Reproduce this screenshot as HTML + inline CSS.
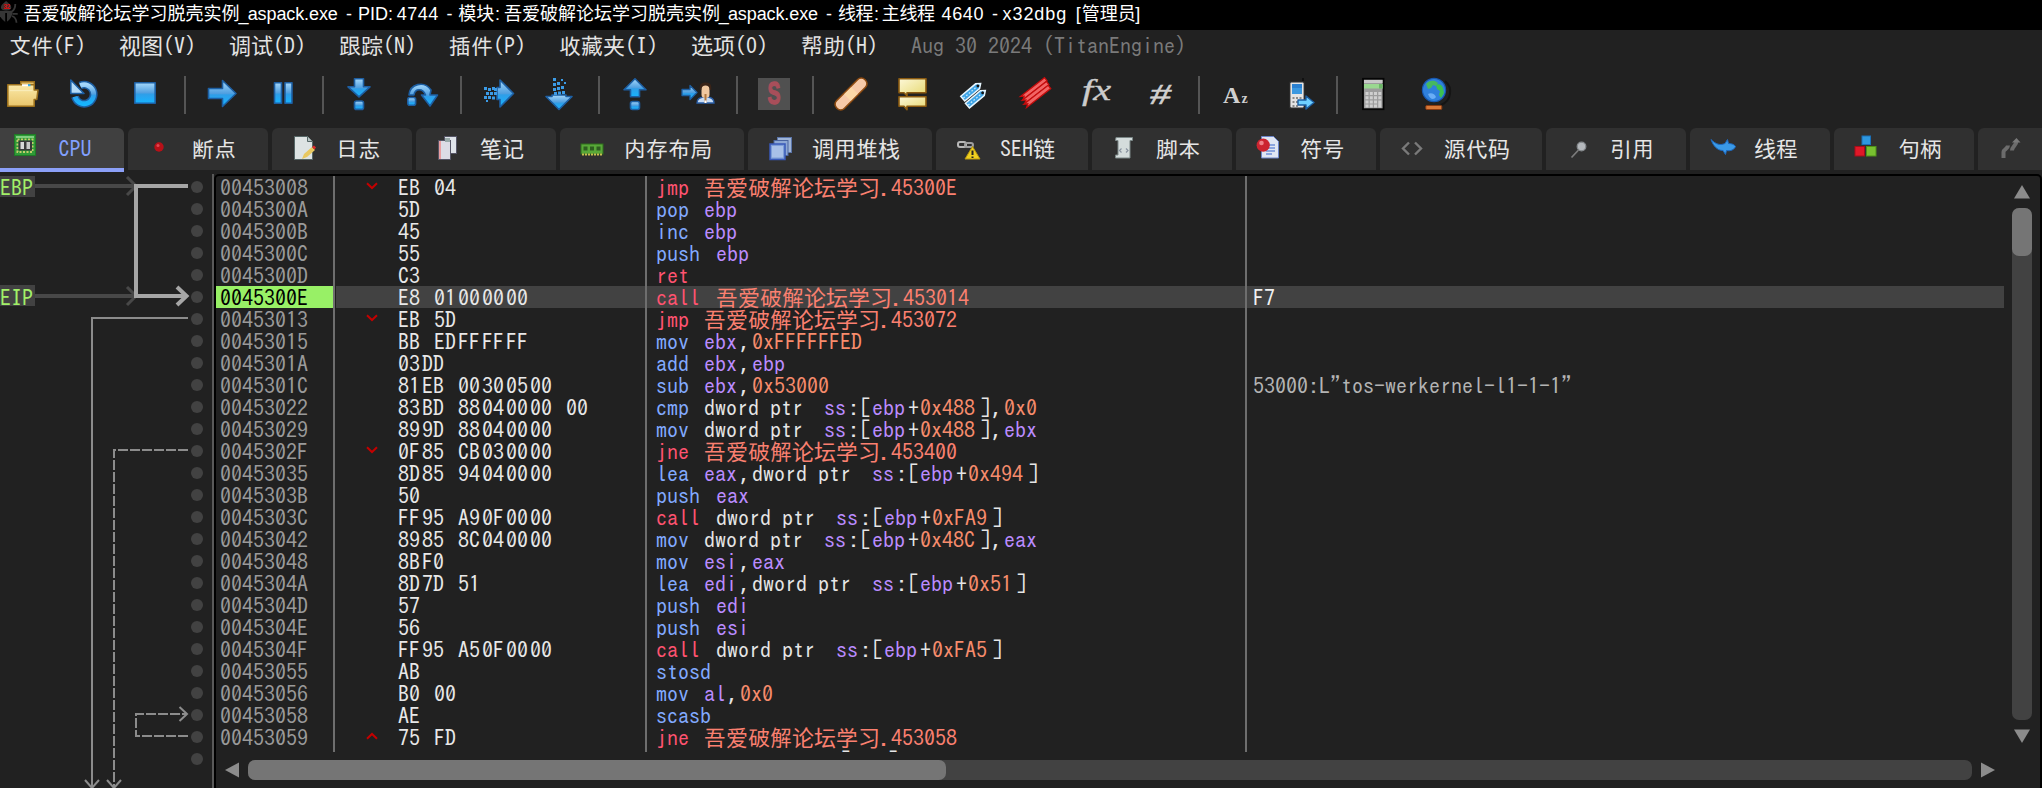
<!DOCTYPE html>
<html lang="zh-CN"><head><meta charset="utf-8"><title>x32dbg</title>
<style>
*{margin:0;padding:0;box-sizing:border-box}
html,body{width:2042px;height:788px;overflow:hidden;background:#212121}
body{position:relative;font-family:"IPAGothic","Noto Sans CJK SC",monospace;font-size:22px;line-height:22px;color:#e0e0e0;font-feature-settings:"hwid"}
.a{position:absolute;white-space:pre}
#title{left:0;top:0;width:2042px;height:30px;background:#000}
#tt{position:absolute;left:23.4px;top:0;height:30px;white-space:nowrap;font-size:0}
#title span{display:inline-block;height:30px;line-height:29px;font-family:"Liberation Sans","Noto Sans CJK SC",sans-serif;font-size:18px;color:#fff;white-space:pre;font-feature-settings:normal}
.m{position:absolute;top:35px;height:22px;white-space:pre;color:#e4e4e4}
.sep{position:absolute;top:76px;width:2px;height:38px;background:#555}
.ic{position:absolute;top:78px;width:32px;height:32px;overflow:visible}
.tab{position:absolute;top:128px;height:42px;background:#303030;border-radius:6px 6px 0 0}
.tab.on{background:#404040;height:44px;border-bottom:4px solid #8ca0f8;border-radius:0 6px 0 0}
.tab svg{position:absolute;left:21px;top:8px;width:22px;height:24px;overflow:visible}
.tab b{position:absolute;left:64px;top:10px;font-weight:normal;white-space:pre;color:#e6e6e6}
.r{position:absolute;left:220px;height:22px;white-space:pre}
.ad{display:inline-block;width:178px;color:#9a9a9a}
.by{display:inline-block;width:258px;color:#e8e8e8}
.ds{display:inline-block;width:597px}
.cm{display:inline-block;color:#b4b4b4}
.k{color:#82aaff}.j{color:#ff5370}.g{color:#bb8cff}.v{color:#f78c6c}.w{color:#e6e6e6}.c{color:#fb8070}
i{display:inline-block;font-style:normal;white-space:pre}
.w1{width:12px}.w2{width:24px}.w3{width:36px}.w4{width:48px}.w5{width:60px}.w7{width:84px}.w9{width:108px}.w10{width:120px}
.dot{position:absolute;left:191px;width:12px;height:12px;border-radius:6px;background:#424242}
.lab{position:absolute;left:0;width:35px;height:21px;background:#424242;color:#a2f068}
</style></head><body>
<svg width="0" height="0" style="position:absolute"><defs><linearGradient id="gb" x1="0" y1="0" x2="0" y2="1"><stop offset="0" stop-color="#a5d8fb"/><stop offset=".5" stop-color="#4f9fe0"/><stop offset=".55" stop-color="#2f9ee8"/><stop offset="1" stop-color="#16b4ff"/></linearGradient><linearGradient id="gy" x1="0" y1="0" x2="0" y2="1"><stop offset="0" stop-color="#fbe9a8"/><stop offset="1" stop-color="#e9c66c"/></linearGradient><linearGradient id="gc" x1="0" y1="0" x2="1" y2="1"><stop offset="0" stop-color="#fdf8d8"/><stop offset="1" stop-color="#e6d870"/></linearGradient></defs></svg>
<div id="title" class="a"><svg class="a" style="left:0;top:0" width="20" height="24" viewBox="0 0 20 24"><path d="M6.100 1C9 3.500 11.300 5 11.300 7.500c0 2-2.300 3-5.200 3s-5.200-1-5.200-3C.9 5 3.200 3.500 6.100 1z" fill="#363636"/><path d="M-1 10.800h13.600C12.600 16 10 20 6.100 22.300 3 20.500 0 17-1 14z" fill="#363636"/><path d="M6.100 13v9.300" stroke="#000" stroke-width="1.800"/><path d="M12 11.500c2-1.500 3.300-4 3.300-7.500M12.500 13.800h5.200M12 16c3 1 4.300 3.500 4.500 6.800" fill="none" stroke="#363636" stroke-width="1.800"/><text x="3.200" y="9.200" font-family="'Liberation Sans',sans-serif" font-weight="bold" font-size="6.500" fill="#e00808" letter-spacing="-.3">32</text></svg>
<div id="tt">
<span style="width:215.1px">吾爱破解论坛学习脱壳实例</span>
<span style="width:9.2px">_</span>
<span style="width:98.3px;letter-spacing:-0.1px">aspack.exe </span>
<span style="width:12.0px">- </span>
<span style="width:38.7px">PID: </span>
<span style="width:49.8px;letter-spacing:0.5px">4744 </span>
<span style="width:11.9px">- </span>
<span style="width:36.6px">模块</span>
<span style="width:9.0px">: </span>
<span style="width:214.8px">吾爱破解论坛学习脱壳实例</span>
<span style="width:9.2px">_</span>
<span style="width:98.0px;letter-spacing:-0.1px">aspack.exe </span>
<span style="width:12.1px">- </span>
<span style="width:35.9px;letter-spacing:-0.5px">线程</span>
<span style="width:7.9px">: </span>
<span style="width:59.8px;letter-spacing:-0.4px">主线程 </span>
<span style="width:50.3px;letter-spacing:0.6px">4640 </span>
<span style="width:10.6px">- </span>
<span style="width:73.2px;letter-spacing:0.95px">x32dbg </span>
<span style="width:6.1px">[</span>
<span style="width:53.6px">管理员</span>
<span style="width:20.0px">]</span>
</div>
</div>
<div class="m" style="left:9px">文件(F)</div>
<div class="m" style="left:119px">视图(V)</div>
<div class="m" style="left:229px">调试(D)</div>
<div class="m" style="left:339px">跟踪(N)</div>
<div class="m" style="left:449px">插件(P)</div>
<div class="m" style="left:559px">收藏夹(I)</div>
<div class="m" style="left:691px">选项(O)</div>
<div class="m" style="left:801px">帮助(H)</div>
<div class="m" style="left:911px;color:#7a7a7a">Aug 30 2024 (TitanEngine)</div>
<svg class="ic" style="left:7px" viewBox="0 0 32 32"><path d="M13.700 3.700h13.600v4h-13.600z" fill="#e3bf68" stroke="#9a6f1c" stroke-width="1.400"/><path d="M.800 6.800h26.400v5.200h3.800l-1.200 9.500h-2.600v6.700h-26.400z" fill="url(#gy)" stroke="#9a6f1c" stroke-width="1.600" stroke-linejoin="round"/><path d="M15 7.200h6" stroke="#fff" stroke-width="2"/><path d="M21 7.200h2.500" stroke="#38b0f0" stroke-width="2"/><path d="M3 12.500h22.500" stroke="#f9ecb8" stroke-width="1.300"/></svg>
<svg class="ic" style="left:69px" viewBox="0 0 32 32"><path d="M11.200 7.600A9.500 9.500 0 1 1 6 18.700" fill="none" stroke="#1d5fa3" stroke-width="7.800"/><path d="M11.200 7.600A9.500 9.500 0 1 1 6 18.700" fill="none" stroke="url(#gb)" stroke-width="4.800"/><path d="M1.800 2v13.500h13.200z" fill="#b4dbf8" stroke="#1d5fa3" stroke-width="1.600" stroke-linejoin="round"/></svg>
<svg class="ic" style="left:131px" viewBox="0 0 32 32"><rect x="3.8" y="4.8" width="20.4" height="20.4" fill="url(#gb)" stroke="#1d5fa3" stroke-width="1.6" stroke-linejoin="round"/></svg>
<div class="sep" style="left:184px"></div>
<svg class="ic" style="left:207px" viewBox="0 0 32 32"><path d="M1.5 10.5h14v-8l13.5 13-13.5 13v-8h-14z" fill="url(#gb)" stroke="#1d5fa3" stroke-width="1.6" stroke-linejoin="round"/></svg>
<svg class="ic" style="left:269px" viewBox="0 0 32 32"><rect x="5.5" y="4.8" width="7" height="20.4" fill="url(#gb)" stroke="#1d5fa3" stroke-width="1.6" stroke-linejoin="round"/><rect x="16" y="4.8" width="7" height="20.4" fill="url(#gb)" stroke="#1d5fa3" stroke-width="1.6" stroke-linejoin="round"/></svg>
<div class="sep" style="left:322px"></div>
<svg class="ic" style="left:345px" viewBox="0 0 32 32"><path d="M9.5 .8h9v8h6.5l-11 10-11-10h6.500z" fill="url(#gb)" stroke="#1d5fa3" stroke-width="1.6" stroke-linejoin="round"/><rect x="9.500" y="23" width="9" height="8.4" rx="2" fill="url(#gb)" stroke="#1d5fa3" stroke-width="1.6" stroke-linejoin="round"/></svg>
<svg class="ic" style="left:407px" viewBox="0 0 32 32"><path d="M2 17C3 6 17 2 24 12l-1 5h7.500l-7.500 11-8.500-11h4C16 10 8 10 7 17z" fill="url(#gb)" stroke="#1d5fa3" stroke-width="1.6" stroke-linejoin="round"/><rect x=".8" y="19.500" width="7.800" height="7.800" rx="2" fill="url(#gb)" stroke="#1d5fa3" stroke-width="1.6" stroke-linejoin="round"/></svg>
<div class="sep" style="left:460px"></div>
<svg class="ic" style="left:483px" viewBox="0 0 32 32"><path d="M14 9.500h3v-7.500l13.500 13.500-13.500 13.500v-7.500h-3z" fill="url(#gb)" stroke="#1d5fa3" stroke-width="1.6" stroke-linejoin="round"/><path d="M1 9h3v3h-3zM5 10h3v3h-3zM9 9h3v3h-3zM3 14h3v3h-3zM7 14h3v3h-3zM11 14h3v3h-3zM1 18h3v3h-3zM5 18h3v3h-3zM9 18.500h3v3h-3zM11 10h3v3h-3zM3 22h2v2h-2z" fill="#3b9be6"/></svg>
<svg class="ic" style="left:545px" viewBox="0 0 32 32"><path d="M7 17v1.500h-6l13 13 13-13h-6v-1.500z" fill="url(#gb)" stroke="#1d5fa3" stroke-width="1.6" stroke-linejoin="round"/><path d="M8 0h3v3h-3zM12 4h3v3h-3zM16 1h2v2h-2zM8 5h3v3h-3zM12 9h3v3h-3zM16 8h3v3h-3zM8 10h3v3h-3zM9 14h3v3h-3zM13 13.500h3v3h-3zM17 13h3v3h-3zM19 4h2v2h-2z" fill="#3b9be6"/></svg>
<div class="sep" style="left:598px"></div>
<svg class="ic" style="left:621px" viewBox="0 0 32 32"><path d="M14 .8l11 11h-6.500v7h-9v-7h-6.500z" fill="url(#gb)" stroke="#1d5fa3" stroke-width="1.6" stroke-linejoin="round"/><rect x="9.500" y="23.500" width="9" height="8" rx="2" fill="url(#gb)" stroke="#1d5fa3" stroke-width="1.6" stroke-linejoin="round"/></svg>
<svg class="ic" style="left:683px" viewBox="0 0 32 32"><path d="M-1 11.500h8v-4l7 7-7 7v-4h-8z" fill="url(#gb)" stroke="#1d5fa3" stroke-width="1.300" stroke-linejoin="round"/><path d="M14 25c0-5 4-6 8.500-6s8.500 1 8.500 6z" fill="#c8dcf4" stroke="#2a5fa8" stroke-width="1.300"/><rect x="18.500" y="7" width="8" height="13" rx="3.500" fill="#f0c8a0"/><path d="M17.500 12c0-7 10-7 10 0v-3c0-5-10-5-10 0z" fill="#3a2418" stroke="#3a2418" stroke-width="1.500"/><path d="M22.500 16v9" stroke="#b07840" stroke-width="2"/><rect x="21.500" y="22.500" width="2" height="2.500" fill="#fff"/></svg>
<div class="sep" style="left:736px"></div>
<svg class="ic" style="left:759px" viewBox="0 0 32 32"><rect x="-1" width="32" height="32" fill="#505050"/><text transform="translate(15 26.300) scale(.72 1.16)" text-anchor="middle" font-family="'Liberation Sans',sans-serif" font-weight="bold" font-size="27" fill="#a84e5a" stroke="#a84e5a" stroke-width="1.200">S</text></svg>
<div class="sep" style="left:812px"></div>
<svg class="ic" style="left:835px" viewBox="0 0 32 32"><g transform="rotate(-45 16 16)"><rect x="-4" y="10.500" width="40" height="11" rx="5" fill="#f6c9a8" stroke="#8c4a10" stroke-width="1.600"/><rect x="11" y="11.300" width="10" height="9.400" fill="#fbd8a8"/></g></svg>
<svg class="ic" style="left:897px" viewBox="0 0 32 32"><path d="M2 .8h27v14h-19l0 3-3-3h-5z" fill="url(#gc)" stroke="#8a5a10" stroke-width="1.600" stroke-linejoin="round"/><path d="M2 18.800h27v9.400h-19l0 3.500-3-3.500h-5z" fill="url(#gc)" stroke="#8a5a10" stroke-width="1.600" stroke-linejoin="round"/></svg>
<svg class="ic" style="left:959px" viewBox="0 0 32 32"><g transform="translate(3.500 -1.500) rotate(-40 16 16) scale(.88)"><path d="M0 8.500h22l4.500 3.500-4.500 3.500h-22z" fill="#3fa4e6" stroke="#e8f6ff" stroke-width="1.700"/><path d="M-1 18h22l4.500 3.500-4.500 3.500h-22z" fill="#3fa4e6" stroke="#e8f6ff" stroke-width="1.700"/><circle cx="22.500" cy="12" r="1.600" fill="#111"/><circle cx="21.500" cy="21.500" r="1.600" fill="#111"/><path d="M1 12h18M0 21.500h18" stroke="#bfe4fa" stroke-width="1.500" stroke-dasharray="2 2"/></g></svg>
<svg class="ic" style="left:1021px" viewBox="0 0 32 32"><g transform="translate(4 -3) rotate(-38 16 16) scale(.9)"><path d="M-4 8.500h34v4.600h-34l3.500-2.300z" fill="#f26464" stroke="#c40c0c" stroke-width="1.400"/><path d="M-5 13.100h34v4.600h-34l3.500-2.300z" fill="#f26464" stroke="#c40c0c" stroke-width="1.400"/><path d="M-6 17.700h34v4.600h-34l3.500-2.300z" fill="#f26464" stroke="#c40c0c" stroke-width="1.400"/></g></svg>
<svg class="ic" style="left:1083px" viewBox="0 0 32 32"><text x="-1" y="22" textLength="29" lengthAdjust="spacingAndGlyphs" font-family="'Liberation Serif',serif" font-style="italic" font-size="30" fill="#cccccc" stroke="#cccccc" stroke-width=".35">fx</text></svg>
<svg class="ic" style="left:1145px" viewBox="0 0 32 32"><text x="5" y="26" textLength="21" lengthAdjust="spacingAndGlyphs" font-family="'Liberation Serif',serif" font-style="italic" font-size="29" fill="#d0d0d0" stroke="#d0d0d0" stroke-width=".5">#</text></svg>
<div class="sep" style="left:1198px"></div>
<svg class="ic" style="left:1221px" viewBox="0 0 32 32"><text x="2" y="24.500" font-family="'Liberation Serif',serif" font-weight="bold" font-size="24" fill="#d0d0d0">A</text><text x="20.500" y="24.500" font-family="'Liberation Serif',serif" font-weight="bold" font-size="14" fill="#d0d0d0">z</text></svg>
<svg class="ic" style="left:1283px" viewBox="0 0 32 32"><rect x="19" y="0" width="2" height="5" fill="#111"/><rect x="6.700" y="3.700" width="14.600" height="26.600" rx="1.500" fill="#e4e4e4" stroke="#2a2a2a" stroke-width="1.400"/><rect x="9" y="6" width="10" height="10" fill="#3a98e0"/><rect x="9" y="6" width="10" height="4" fill="#2a80d0"/><path d="M9.500 19h2v2h-2zM13 19h2v2h-2zM16.500 19h2v2h-2zM9.500 23h2v2h-2zM13 23h2v2h-2zM9.500 27h2v2h-2zM13 27h2v2h-2z" fill="#8a8a8a"/><path d="M15 22h8v-4l8 6.500-8 6.500v-4h-8z" fill="#6fd0ff" stroke="#1d5fa3" stroke-width="1.400" stroke-linejoin="round"/></svg>
<div class="sep" style="left:1336px"></div>
<svg class="ic" style="left:1359px" viewBox="0 0 32 32"><rect x="4" y=".8" width="20.500" height="30.400" fill="#9c9c9c" stroke="#050505" stroke-width="1.800"/><rect x="5" y="2" width="18.500" height="3" fill="#c8c8c8"/><rect x="5" y="6" width="18.500" height="4.500" fill="#9ad890"/><rect x="20" y="6" width="3.500" height="4.500" fill="#6cb868"/><path d="M6.500 14h3v3h-3zM10.800 14h3v3h-3zM15 14h3v3h-3zM19.300 14h3v3h-3zM6.500 18.200h3v3h-3zM10.800 18.200h3v3h-3zM15 18.200h3v3h-3zM19.300 18.200h3v3h-3zM6.500 22.400h3v3h-3zM10.800 22.400h3v3h-3zM15 22.400h3v3h-3zM6.500 26.600h3v3h-3zM10.800 26.600h3v3h-3zM15 26.600h3v3h-3zM19.300 22.400h3v7.200h-3z" fill="#cfcfcf"/></svg>
<svg class="ic" style="left:1421px" viewBox="0 0 32 32"><path d="M24 3a14 14 0 0 1-4 24" fill="none" stroke="#151515" stroke-width="2"/><circle cx="13" cy="12" r="11.600" fill="#2f80dc" stroke="#1858b0" stroke-width="1.200"/><path d="M5 6c2-3 6-4 9-3l3 2-2 3-3-1-2 3-3 1z" fill="#46b860"/><path d="M15 7c3-2 6 0 7 3l1 5-3 5-2-3 1-4-3-2z" fill="#3cc050"/><path d="M7 16c3-2 7 0 8 3-2 3-6 3-8-3z" fill="#6aaef6"/><rect x="4.800" y="27.500" width="16" height="4" rx="1" fill="#d87838" stroke="#8a3a10" stroke-width="1"/></svg>
<div class="tab on" style="left:-8px;width:132px"><svg viewBox="0 0 22 24"><g transform="translate(1 -2)"><rect x=".500" y=".500" width="21" height="21" fill="#2f9a38" stroke="#1f7a26"/><rect x="2" y="2" width="18" height="2" fill="#7fcf80"/><rect x="3.500" y="5.500" width="15" height="12.500" fill="none" stroke="#c4cc6c" stroke-width="2" stroke-dasharray="2 1.500"/><rect x="4.500" y="6.500" width="13.500" height="10" fill="#3a3a3a"/><rect x="6.500" y="8" width="3.500" height="7" fill="#d8d8d8"/><rect x="12.500" y="8" width="3.500" height="7" fill="#c8c8c8"/></g></svg><b style="color:#82a0ff;left:66.5px">CPU</b></div>
<div class="tab" style="left:128px;width:140px"><svg viewBox="0 0 22 24"><circle cx="10" cy="11" r="4.700" fill="#b81018"/><circle cx="9" cy="9.500" r="1.500" fill="#e04850"/></svg><b>断点</b></div>
<div class="tab" style="left:272px;width:140px"><svg viewBox="0 0 22 24"><path d="M1.500 .500h13l5 5v18h-18z" fill="#dde3e3" stroke="#566"/><path d="M14.500 .500v5h5" fill="#b8c4c4" stroke="#566"/><path d="M9 23l2-5 8-7 3 3-8 7z" fill="#e8c860"/><path d="M19 11l2-1.500 2 2-1.500 2z" fill="#e02828"/></svg><b>日志</b></div>
<div class="tab" style="left:416px;width:140px"><svg viewBox="0 0 22 24"><rect x="7.500" y=".500" width="12" height="17" fill="#dfe4ea" stroke="#556"/><rect x="1.500" y="4.500" width="12" height="19" fill="#dcdce6" stroke="#556"/><path d="M3 5v18" stroke="#e88" stroke-width="1.500"/><rect x="8" y="2" width="5" height="4" fill="#9aa"/></svg><b>笔记</b></div>
<div class="tab" style="left:560px;width:184px"><svg viewBox="0 0 22 24"><rect x="0" y="8" width="22" height="10" fill="#58a838" stroke="#2e6e1c"/><path d="M2.500 10.500h4v4h-4zM9 10.500h4v4h-4zM15.500 10.500h4v4h-4z" fill="#2e5e20"/><path d="M1 18.500h20" stroke="#c8c050" stroke-width="2" stroke-dasharray="2 1"/></svg><b>内存布局</b></div>
<div class="tab" style="left:748px;width:184px"><svg viewBox="0 0 22 24"><rect x="8.500" y="1.500" width="14" height="15" fill="#9eb4d8" stroke="#5a74a8"/><rect x="5" y="4.500" width="14" height="15" fill="#8ea8d4" stroke="#4a64a0"/><rect x="1" y="8" width="15" height="15.500" fill="#7e9ed8" stroke="#3858b8" stroke-width="1.500"/><rect x="3" y="10" width="11" height="11.500" fill="#a8c0e8"/></svg><b>调用堆栈</b></div>
<div class="tab" style="left:936px;width:152px"><svg viewBox="0 0 22 24"><rect x="1" y="6" width="8" height="5" rx="2" fill="none" stroke="#b8b8b8" stroke-width="2"/><rect x="8" y="7" width="8" height="4" rx="2" fill="none" stroke="#a0a0a0" stroke-width="2"/><path d="M15.500 10.500l7.500 12.500h-15z" fill="#f0d020" stroke="#b89810"/><path d="M15.500 14.500v4.500M15.500 20.500v1.500" stroke="#222" stroke-width="2"/></svg><b>SEH链</b></div>
<div class="tab" style="left:1092px;width:140px"><svg viewBox="0 0 22 24"><path d="M3 1.500h16.500v3h-2.500v17.500h-14.500v-3h2.500v-14.500h-2.500z" fill="#d4dcdc" stroke="#7a8686"/><path d="M8.500 12.500l-2 2 2 2M13 12.500l2 2-2 2" fill="none" stroke="#8a94a0" stroke-width="1.200"/></svg><b>脚本</b></div>
<div class="tab" style="left:1236px;width:140px"><svg viewBox="0 0 22 24"><path d="M4.500 .500h12l5 5v16.500h-17z" fill="#dfe6f4" stroke="#6a84c8"/><path d="M9 9h9M9 12h9M9 15h9M9 18h6" stroke="#7090d8" stroke-width="1.400"/><circle cx="6.200" cy="9.200" r="6.600" fill="#cc2430"/><circle cx="4.500" cy="7" r="2.300" fill="#ee8088"/></svg><b>符号</b></div>
<div class="tab" style="left:1380px;width:162px"><svg viewBox="0 0 22 24"><path d="M8 6.500l-6 6 6 6M14 6.500l6 6-6 6" fill="none" stroke="#7a7a7a" stroke-width="2.400"/></svg><b>源代码</b></div>
<div class="tab" style="left:1546px;width:140px"><svg viewBox="0 0 22 24"><circle cx="14.500" cy="10.500" r="4.300" fill="#b4b8bc" stroke="#85898d" stroke-width="1.300"/><path d="M11.500 14l-7 7.500" stroke="#7c7c7c" stroke-width="1.700"/></svg><b>引用</b></div>
<div class="tab" style="left:1690px;width:140px"><svg viewBox="0 0 22 24"><path d="M0 3.500c5 5 9 6 14 4l2.500-4 1 4c3 0 6 1 7 3-1 3-5 5-9 4l-1 4-2.500-4c-6 0-10-5-12-11z" fill="#3a9ae8" stroke="#1c68c0"/></svg><b>线程</b></div>
<div class="tab" style="left:1834px;width:140px"><svg viewBox="0 0 22 24"><g transform="translate(-1 -1.500)"><rect x="8" y="1.500" width="8.500" height="8.500" fill="#2e98e0" stroke="#1a70b8"/><rect x="1" y="12" width="9.500" height="9.500" fill="#e01828" stroke="#a80c18"/><rect x="12.500" y="12" width="9.500" height="9.500" fill="#78c030" stroke="#4e9018"/></g></svg><b>句柄</b></div>
<div class="tab" style="left:1978px;width:100px"><svg viewBox="0 0 22 24"><path d="M4.500 22v-6c0-3 4.500-3 4.500-6.500M13 14.500c0-4 4.500-5 4.500-9.500" fill="none" stroke="#6c6c6c" stroke-width="4"/><path d="M13 6.500l4.500-4.500 4 4.500z" fill="#7a7a7a"/></svg><b></b></div>
<div class="a" style="left:212px;top:174px;width:2px;height:614px;background:#5a5a5a"></div>
<div class="a" style="left:214px;top:174px;width:1828px;height:618px;border:2px solid #000;border-radius:5px"></div>
<div class="a" style="left:336px;top:286px;width:1668px;height:22px;background:#424242"></div>
<div class="a" style="left:216px;top:286px;width:118px;height:22px;background:#98f066"></div>
<div class="a" style="left:333px;top:176px;width:2px;height:576px;background:#6e6e6e"></div>
<div class="a" style="left:645px;top:176px;width:2px;height:576px;background:#6e6e6e"></div>
<div class="a" style="left:1245px;top:176px;width:2px;height:576px;background:#6e6e6e"></div>
<div class="a" style="left:0;top:0;width:2004px;height:752px;overflow:hidden">
<div class="dot" style="top:181px"></div>
<div class="r" style="top:177px"><span class="ad">00453008 </span><span class="by"><i class="w2">EB</i><i class="w1"> </i><i class="w2">04</i> </span><span class="ds"><i class="j w3">jmp</i><i class="w w1"> </i><i class="c">吾爱破解论坛学习.45300E</i> </span></div>
<svg class="a" style="left:366px;top:182px" width="12" height="8" viewBox="0 0 12 8"><path d="M1 1.2L6 6L11 1.2" fill="none" stroke="#c40000" stroke-width="2"/></svg>
<div class="dot" style="top:203px"></div>
<div class="r" style="top:199px"><span class="ad">0045300A </span><span class="by"><i class="w2">5D</i> </span><span class="ds"><i class="k w3">pop</i><i class="w w1"> </i><i class="g w3">ebp</i> </span></div>
<div class="dot" style="top:225px"></div>
<div class="r" style="top:221px"><span class="ad">0045300B </span><span class="by"><i class="w2">45</i> </span><span class="ds"><i class="k w3">inc</i><i class="w w1"> </i><i class="g w3">ebp</i> </span></div>
<div class="dot" style="top:247px"></div>
<div class="r" style="top:243px"><span class="ad">0045300C </span><span class="by"><i class="w2">55</i> </span><span class="ds"><i class="k w4">push</i><i class="w w1"> </i><i class="g w3">ebp</i> </span></div>
<div class="dot" style="top:269px"></div>
<div class="r" style="top:265px"><span class="ad">0045300D </span><span class="by"><i class="w2">C3</i> </span><span class="ds"><i class="j w3">ret</i> </span></div>
<div class="dot" style="top:291px"></div>
<div class="r" style="top:287px"><span class="ad" style="color:#000">0045300E </span><span class="by"><i class="w2">E8</i><i class="w1"> </i><i class="w2">01</i><i class="w2">00</i><i class="w2">00</i><i class="w2">00</i> </span><span class="ds"><i class="j w4">call</i><i class="w w1"> </i><i class="c">吾爱破解论坛学习.453014</i> </span><span class="cm" style="color:#f0f0f0">F7</span></div>
<div class="dot" style="top:313px"></div>
<div class="r" style="top:309px"><span class="ad">00453013 </span><span class="by"><i class="w2">EB</i><i class="w1"> </i><i class="w2">5D</i> </span><span class="ds"><i class="j w3">jmp</i><i class="w w1"> </i><i class="c">吾爱破解论坛学习.453072</i> </span></div>
<svg class="a" style="left:366px;top:314px" width="12" height="8" viewBox="0 0 12 8"><path d="M1 1.2L6 6L11 1.2" fill="none" stroke="#c40000" stroke-width="2"/></svg>
<div class="dot" style="top:335px"></div>
<div class="r" style="top:331px"><span class="ad">00453015 </span><span class="by"><i class="w2">BB</i><i class="w1"> </i><i class="w2">ED</i><i class="w2">FF</i><i class="w2">FF</i><i class="w2">FF</i> </span><span class="ds"><i class="k w3">mov</i><i class="w w1"> </i><i class="g w3">ebx</i><i class="w w1">,</i><i class="v w10">0xFFFFFFED</i> </span></div>
<div class="dot" style="top:357px"></div>
<div class="r" style="top:353px"><span class="ad">0045301A </span><span class="by"><i class="w2">03</i><i class="w2">DD</i> </span><span class="ds"><i class="k w3">add</i><i class="w w1"> </i><i class="g w3">ebx</i><i class="w w1">,</i><i class="g w3">ebp</i> </span></div>
<div class="dot" style="top:379px"></div>
<div class="r" style="top:375px"><span class="ad">0045301C </span><span class="by"><i class="w2">81</i><i class="w2">EB</i><i class="w1"> </i><i class="w2">00</i><i class="w2">30</i><i class="w2">05</i><i class="w2">00</i> </span><span class="ds"><i class="k w3">sub</i><i class="w w1"> </i><i class="g w3">ebx</i><i class="w w1">,</i><i class="v w7">0x53000</i> </span><span class="cm">53000:L"tos-werkernel-l1-1-1"</span></div>
<div class="dot" style="top:401px"></div>
<div class="r" style="top:397px"><span class="ad">00453022 </span><span class="by"><i class="w2">83</i><i class="w2">BD</i><i class="w1"> </i><i class="w2">88</i><i class="w2">04</i><i class="w2">00</i><i class="w2">00</i><i class="w1"> </i><i class="w2">00</i> </span><span class="ds"><i class="k w3">cmp</i><i class="w w1"> </i><i class="w w9">dword ptr</i><i class="w w1"> </i><i class="g w2">ss</i><i class="w w1">:</i><i class="w w1">[</i><i class="g w3">ebp</i><i class="w w1">+</i><i class="v w5">0x488</i><i class="w w1">]</i><i class="w w1">,</i><i class="v w3">0x0</i> </span></div>
<div class="dot" style="top:423px"></div>
<div class="r" style="top:419px"><span class="ad">00453029 </span><span class="by"><i class="w2">89</i><i class="w2">9D</i><i class="w1"> </i><i class="w2">88</i><i class="w2">04</i><i class="w2">00</i><i class="w2">00</i> </span><span class="ds"><i class="k w3">mov</i><i class="w w1"> </i><i class="w w9">dword ptr</i><i class="w w1"> </i><i class="g w2">ss</i><i class="w w1">:</i><i class="w w1">[</i><i class="g w3">ebp</i><i class="w w1">+</i><i class="v w5">0x488</i><i class="w w1">]</i><i class="w w1">,</i><i class="g w3">ebx</i> </span></div>
<div class="dot" style="top:445px"></div>
<div class="r" style="top:441px"><span class="ad">0045302F </span><span class="by"><i class="w2">0F</i><i class="w2">85</i><i class="w1"> </i><i class="w2">CB</i><i class="w2">03</i><i class="w2">00</i><i class="w2">00</i> </span><span class="ds"><i class="j w3">jne</i><i class="w w1"> </i><i class="c">吾爱破解论坛学习.453400</i> </span></div>
<svg class="a" style="left:366px;top:446px" width="12" height="8" viewBox="0 0 12 8"><path d="M1 1.2L6 6L11 1.2" fill="none" stroke="#c40000" stroke-width="2"/></svg>
<div class="dot" style="top:467px"></div>
<div class="r" style="top:463px"><span class="ad">00453035 </span><span class="by"><i class="w2">8D</i><i class="w2">85</i><i class="w1"> </i><i class="w2">94</i><i class="w2">04</i><i class="w2">00</i><i class="w2">00</i> </span><span class="ds"><i class="k w3">lea</i><i class="w w1"> </i><i class="g w3">eax</i><i class="w w1">,</i><i class="w w9">dword ptr</i><i class="w w1"> </i><i class="g w2">ss</i><i class="w w1">:</i><i class="w w1">[</i><i class="g w3">ebp</i><i class="w w1">+</i><i class="v w5">0x494</i><i class="w w1">]</i> </span></div>
<div class="dot" style="top:489px"></div>
<div class="r" style="top:485px"><span class="ad">0045303B </span><span class="by"><i class="w2">50</i> </span><span class="ds"><i class="k w4">push</i><i class="w w1"> </i><i class="g w3">eax</i> </span></div>
<div class="dot" style="top:511px"></div>
<div class="r" style="top:507px"><span class="ad">0045303C </span><span class="by"><i class="w2">FF</i><i class="w2">95</i><i class="w1"> </i><i class="w2">A9</i><i class="w2">0F</i><i class="w2">00</i><i class="w2">00</i> </span><span class="ds"><i class="j w4">call</i><i class="w w1"> </i><i class="w w9">dword ptr</i><i class="w w1"> </i><i class="g w2">ss</i><i class="w w1">:</i><i class="w w1">[</i><i class="g w3">ebp</i><i class="w w1">+</i><i class="v w5">0xFA9</i><i class="w w1">]</i> </span></div>
<div class="dot" style="top:533px"></div>
<div class="r" style="top:529px"><span class="ad">00453042 </span><span class="by"><i class="w2">89</i><i class="w2">85</i><i class="w1"> </i><i class="w2">8C</i><i class="w2">04</i><i class="w2">00</i><i class="w2">00</i> </span><span class="ds"><i class="k w3">mov</i><i class="w w1"> </i><i class="w w9">dword ptr</i><i class="w w1"> </i><i class="g w2">ss</i><i class="w w1">:</i><i class="w w1">[</i><i class="g w3">ebp</i><i class="w w1">+</i><i class="v w5">0x48C</i><i class="w w1">]</i><i class="w w1">,</i><i class="g w3">eax</i> </span></div>
<div class="dot" style="top:555px"></div>
<div class="r" style="top:551px"><span class="ad">00453048 </span><span class="by"><i class="w2">8B</i><i class="w2">F0</i> </span><span class="ds"><i class="k w3">mov</i><i class="w w1"> </i><i class="g w3">esi</i><i class="w w1">,</i><i class="g w3">eax</i> </span></div>
<div class="dot" style="top:577px"></div>
<div class="r" style="top:573px"><span class="ad">0045304A </span><span class="by"><i class="w2">8D</i><i class="w2">7D</i><i class="w1"> </i><i class="w2">51</i> </span><span class="ds"><i class="k w3">lea</i><i class="w w1"> </i><i class="g w3">edi</i><i class="w w1">,</i><i class="w w9">dword ptr</i><i class="w w1"> </i><i class="g w2">ss</i><i class="w w1">:</i><i class="w w1">[</i><i class="g w3">ebp</i><i class="w w1">+</i><i class="v w4">0x51</i><i class="w w1">]</i> </span></div>
<div class="dot" style="top:599px"></div>
<div class="r" style="top:595px"><span class="ad">0045304D </span><span class="by"><i class="w2">57</i> </span><span class="ds"><i class="k w4">push</i><i class="w w1"> </i><i class="g w3">edi</i> </span></div>
<div class="dot" style="top:621px"></div>
<div class="r" style="top:617px"><span class="ad">0045304E </span><span class="by"><i class="w2">56</i> </span><span class="ds"><i class="k w4">push</i><i class="w w1"> </i><i class="g w3">esi</i> </span></div>
<div class="dot" style="top:643px"></div>
<div class="r" style="top:639px"><span class="ad">0045304F </span><span class="by"><i class="w2">FF</i><i class="w2">95</i><i class="w1"> </i><i class="w2">A5</i><i class="w2">0F</i><i class="w2">00</i><i class="w2">00</i> </span><span class="ds"><i class="j w4">call</i><i class="w w1"> </i><i class="w w9">dword ptr</i><i class="w w1"> </i><i class="g w2">ss</i><i class="w w1">:</i><i class="w w1">[</i><i class="g w3">ebp</i><i class="w w1">+</i><i class="v w5">0xFA5</i><i class="w w1">]</i> </span></div>
<div class="dot" style="top:665px"></div>
<div class="r" style="top:661px"><span class="ad">00453055 </span><span class="by"><i class="w2">AB</i> </span><span class="ds"><i class="k w5">stosd</i> </span></div>
<div class="dot" style="top:687px"></div>
<div class="r" style="top:683px"><span class="ad">00453056 </span><span class="by"><i class="w2">B0</i><i class="w1"> </i><i class="w2">00</i> </span><span class="ds"><i class="k w3">mov</i><i class="w w1"> </i><i class="g w2">al</i><i class="w w1">,</i><i class="v w3">0x0</i> </span></div>
<div class="dot" style="top:709px"></div>
<div class="r" style="top:705px"><span class="ad">00453058 </span><span class="by"><i class="w2">AE</i> </span><span class="ds"><i class="k w5">scasb</i> </span></div>
<div class="dot" style="top:731px"></div>
<div class="r" style="top:727px"><span class="ad">00453059 </span><span class="by"><i class="w2">75</i><i class="w1"> </i><i class="w2">FD</i> </span><span class="ds"><i class="j w3">jne</i><i class="w w1"> </i><i class="c">吾爱破解论坛学习.453058</i> </span></div>
<svg class="a" style="left:366px;top:732px" width="12" height="8" viewBox="0 0 12 8"><path d="M1 6.8L6 2L11 6.8" fill="none" stroke="#c40000" stroke-width="2"/></svg>
<div class="dot" style="top:753px"></div>
<div class="r" style="top:750px"><span class="ds" style="margin-left:436px"><i class="k w3">cmp</i><i class="w w1"> </i><i class="w w8">byte ptr</i><i class="w w1"> </i><i class="g w2">ds</i><i class="w w1">:</i><i class="w w1">[</i><i class="g w3">edi</i><i class="w w1">]</i><i class="w w1">,</i><i class="g w2">al</i></span></div>
</div>
<div class="dot" style="top:753px"></div>
<div class="lab" style="top:176px"><span class="a" style="left:0;top:1px">EBP</span></div>
<div class="lab" style="top:285px"><span class="a" style="left:0;top:2px">EIP</span></div>
<svg class="a" style="left:0;top:174px" width="212" height="614" viewBox="0 174 212 614" fill="none"><path d="M35 186H136" stroke="#484848" stroke-width="4"/><path d="M127 177L136 186L127 195" stroke="#484848" stroke-width="3"/><path d="M35 296H136" stroke="#484848" stroke-width="4"/><path d="M127 287L136 296L127 305" stroke="#484848" stroke-width="3"/><path d="M188 186H136V296H186" stroke="#a6a6a6" stroke-width="4"/><path d="M177 287L186.5 296L177 305" stroke="#a6a6a6" stroke-width="4"/><path d="M188 318H92V788" stroke="#8c8c8c" stroke-width="2"/><path d="M85 780L92 788L99 780" stroke="#8c8c8c" stroke-width="2"/><path d="M188 450H114V788" stroke="#8c8c8c" stroke-width="2" stroke-dasharray="10 2"/><path d="M107 780L114 788L121 780" stroke="#8c8c8c" stroke-width="2"/><path d="M188 736H136V714H186" stroke="#8c8c8c" stroke-width="2" stroke-dasharray="10 2"/><path d="M179.5 707L187 714L179.5 721" stroke="#8c8c8c" stroke-width="2"/></svg>
<div class="a" style="left:2012px;top:208px;width:20px;height:512px;border-radius:7px;background:#424242"></div>
<div class="a" style="left:2012px;top:208px;width:20px;height:48px;border-radius:7px;background:#757575"></div>
<svg class="a" style="left:2012px;top:184px" width="20" height="16" viewBox="0 0 20 16"><path d="M10 1L18 14.5H2Z" fill="#8c8c8c"/></svg>
<svg class="a" style="left:2012px;top:728px" width="20" height="16" viewBox="0 0 20 16"><path d="M10 15L18 1.5H2Z" fill="#8c8c8c"/></svg>
<div class="a" style="left:248px;top:760px;width:1724px;height:20px;border-radius:7px;background:#424242"></div>
<div class="a" style="left:248px;top:760px;width:698px;height:20px;border-radius:7px;background:#757575"></div>
<svg class="a" style="left:224px;top:761px" width="16" height="18" viewBox="0 0 16 18"><path d="M1 9L15 1.5V16.5Z" fill="#8c8c8c"/></svg>
<svg class="a" style="left:1980px;top:761px" width="16" height="18" viewBox="0 0 16 18"><path d="M15 9L1 1.5V16.5Z" fill="#8c8c8c"/></svg>
</body></html>
